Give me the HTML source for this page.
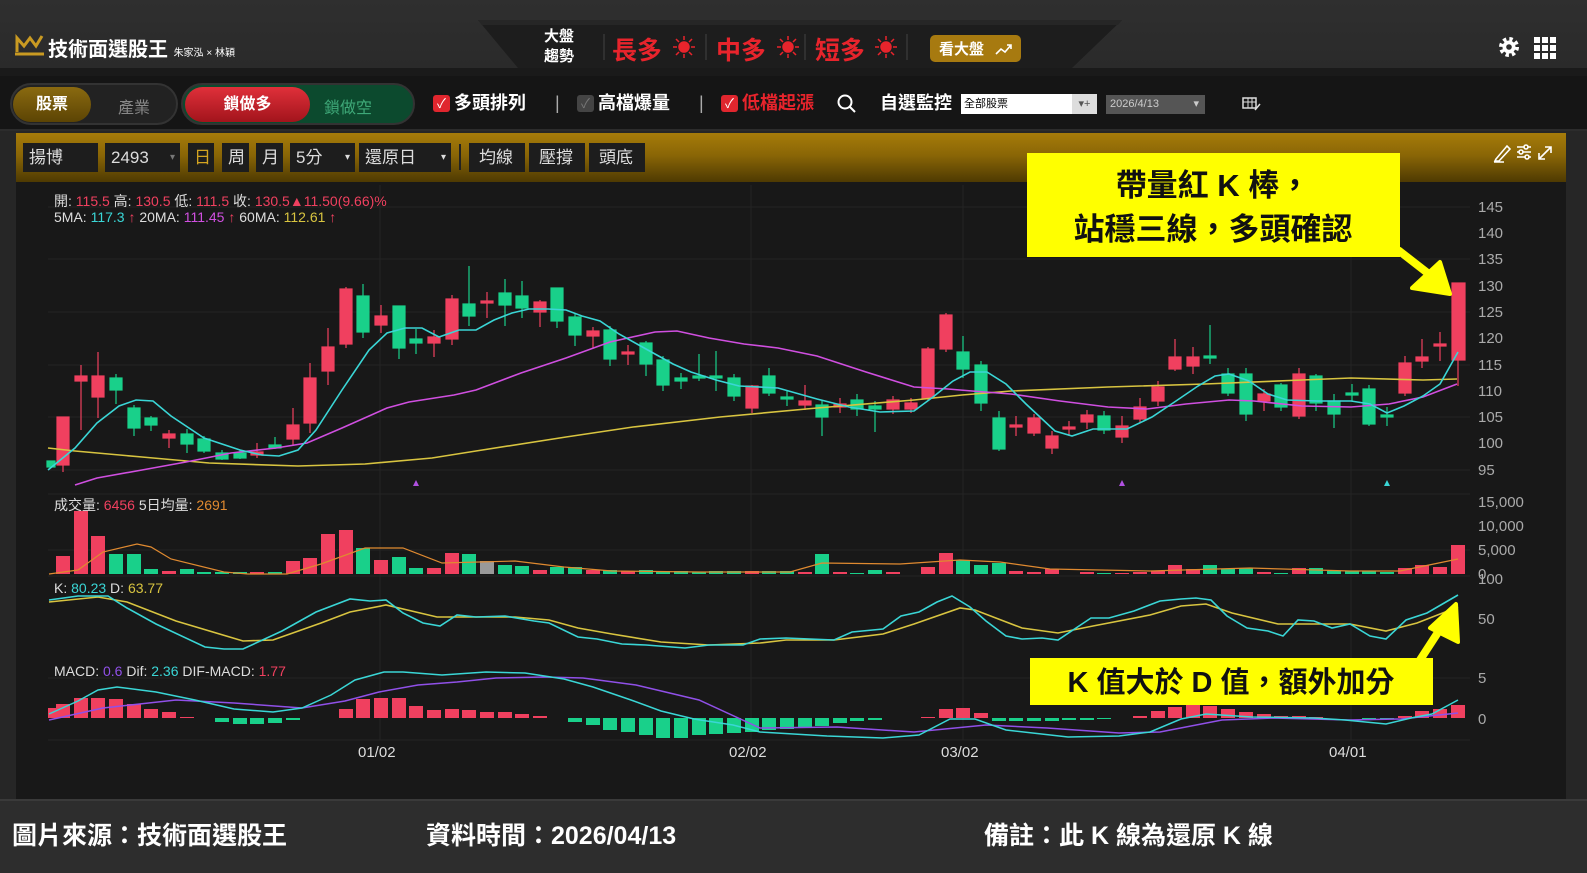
<!DOCTYPE html>
<html><head><meta charset="utf-8">
<style>
*{margin:0;padding:0;box-sizing:border-box}
body{width:1587px;height:873px;overflow:hidden;background:#262626;font-family:"Liberation Sans","Noto Sans CJK TC",sans-serif;position:relative;color:#fff}
.abs{position:absolute}
.top{left:0;top:0;width:1587px;height:70px;background:linear-gradient(#2f2f2f,#2a2a2a)}
.band{left:0;top:68px;width:1587px;height:8px;background:#1a1a1a}
.tool{left:0;top:76px;width:1587px;height:55px;background:#151515;border-bottom:2px solid #2c2c2c}
.gold{left:16px;top:133px;width:1550px;height:49px;background:linear-gradient(#a67c0a,#8a6606 45%,#4e3a02)}
.btn{position:absolute;top:143px;height:29px;background:#1d1d1d;color:#ddd;font-size:17px;line-height:29px;padding-left:6px}
.chart{left:16px;top:182px;width:1550px;height:618px;background:#181818}
.bottom{left:0;top:800px;width:1587px;height:73px;background:#2d2d2d}
.cap{top:816px;font-size:25px;color:#fff;font-weight:bold;letter-spacing:0}
.cb{position:absolute;top:95px;width:17px;height:17px;border-radius:3px;background:#e0262e;color:#fff;font-size:13px;line-height:17px;text-align:center}
.tt{position:absolute;top:90px;font-size:18px;font-weight:bold;line-height:26px}
</style></head><body>
<div class="abs top"></div>
<svg class="abs" style="left:0;top:0" width="1587" height="70">
<polygon points="478,20 1122,20 1072,68 518,68" fill="#1d1d1d"/>
<polygon points="478,20 1122,20 1118,25 482,25" fill="#262626"/>
<path d="M17 52 L17 38 L24 46 L30 38 L36 46 L42 36 M15 54 L44 54" stroke="#c99a22" stroke-width="3" fill="none"/>
<line x1="604" y1="34" x2="604" y2="60" stroke="#444"/><line x1="706" y1="34" x2="706" y2="60" stroke="#444"/><line x1="805" y1="34" x2="805" y2="60" stroke="#444"/><line x1="907" y1="34" x2="907" y2="60" stroke="#444"/>
<g fill="#e8242c" stroke="#e8242c" stroke-width="1.5">
<circle cx="684" cy="47" r="5"/><path d="M684 36v4M684 54v4M673 47h4M691 47h4M676 39l3 3M689 52l3 3M692 39l-3 3M676 55l3-3"/>
<circle cx="788" cy="47" r="5"/><path d="M788 36v4M788 54v4M777 47h4M795 47h4M780 39l3 3M793 52l3 3M796 39l-3 3M780 55l3-3"/>
<circle cx="886" cy="47" r="5"/><path d="M886 36v4M886 54v4M875 47h4M893 47h4M878 39l3 3M891 52l3 3M894 39l-3 3M878 55l3-3"/>
</g>
<rect x="930" y="35" width="91" height="27" rx="5" fill="#a77a10"/>
<path d="M996 54 l5 -5 l4 3 l6 -7 M1007 45 h4 v4" stroke="#fff" stroke-width="1.6" fill="none"/>
<circle cx="1509" cy="47" r="6.5" fill="#fff"/>
<circle cx="1509" cy="47" r="8" fill="none" stroke="#fff" stroke-width="4" stroke-dasharray="3.3 3"/>
<circle cx="1509" cy="47" r="2.8" fill="#2e2e2e"/>
<g fill="#fff"><rect x="1534" y="37" width="6" height="6"/><rect x="1542" y="37" width="6" height="6"/><rect x="1550" y="37" width="6" height="6"/><rect x="1534" y="45" width="6" height="6"/><rect x="1542" y="45" width="6" height="6"/><rect x="1550" y="45" width="6" height="6"/><rect x="1534" y="53" width="6" height="6"/><rect x="1542" y="53" width="6" height="6"/><rect x="1550" y="53" width="6" height="6"/></g>
</svg>
<div class="abs" style="left:48px;top:33px;font-size:20px;font-weight:bold">技術面選股王 <span style="font-size:10px;font-weight:normal">朱家泓 × 林穎</span></div>
<div class="abs" style="left:544px;top:27px;font-size:15px;font-weight:bold;line-height:20px">大盤<br>趨勢</div>
<div class="abs" style="left:612px;top:31px;font-size:25px;font-weight:bold;color:#e8242c">長多</div>
<div class="abs" style="left:716px;top:31px;font-size:25px;font-weight:bold;color:#e8242c">中多</div>
<div class="abs" style="left:815px;top:31px;font-size:25px;font-weight:bold;color:#e8242c">短多</div>
<div class="abs" style="left:939px;top:38px;font-size:15px;font-weight:bold">看大盤</div>
<div class="abs band"></div>
<div class="abs tool"></div>
<div class="abs" style="left:10px;top:83px;width:168px;height:42px;border-radius:21px;background:#222;border:2px solid #333"></div>
<div class="abs" style="left:13px;top:87px;width:78px;height:35px;border-radius:18px;background:linear-gradient(#8a6a10,#5c4404);text-align:center;line-height:35px;font-weight:bold;font-size:16px">股票</div>
<div class="abs" style="left:118px;top:94px;font-size:16px;color:#888">產業</div>
<div class="abs" style="left:181px;top:83px;width:234px;height:42px;border-radius:21px;background:#0c4a2e;border:2px solid #333"></div>
<div class="abs" style="left:185px;top:87px;width:125px;height:35px;border-radius:18px;background:linear-gradient(#e0303a,#a2141c);text-align:center;line-height:35px;font-weight:bold;font-size:16px">鎖做多</div>
<div class="abs" style="left:324px;top:94px;font-size:16px;color:#3ea878">鎖做空</div>
<div class="cb" style="left:433px">✓</div><div class="tt" style="left:454px">多頭排列</div>
<div class="tt" style="left:555px;color:#aaa;font-weight:normal">|</div>
<div class="cb" style="left:577px;background:#444;color:#777">✓</div><div class="tt" style="left:598px">高檔爆量</div>
<div class="tt" style="left:699px;color:#aaa;font-weight:normal">|</div>
<div class="cb" style="left:721px">✓</div><div class="tt" style="left:742px;color:#e8242c">低檔起漲</div>
<svg class="abs" style="left:836px;top:93px" width="22" height="22"><circle cx="9" cy="9" r="6.5" stroke="#fff" stroke-width="2" fill="none"/><line x1="14" y1="14" x2="19" y2="19" stroke="#fff" stroke-width="2"/></svg>
<div class="tt" style="left:880px">自選監控</div>
<div class="abs" style="left:961px;top:94px;width:111px;height:20px;background:#fff;color:#000;font-size:11px;line-height:20px;padding-left:3px">全部股票</div>
<div class="abs" style="left:1072px;top:94px;width:25px;height:20px;background:#ddd;color:#555;font-size:11px;line-height:20px;text-align:center">▾+</div>
<div class="abs" style="left:1106px;top:95px;width:99px;height:19px;background:#555;color:#ccc;font-size:11px;line-height:19px;padding-left:4px">2026/4/13 <span style="float:right;padding-right:6px">▾</span></div>
<svg class="abs" style="left:1242px;top:96px" width="20" height="16"><rect x="1" y="2" width="13" height="10" stroke="#ddd" fill="none" stroke-width="1.5"/><line x1="1" y1="6" x2="14" y2="6" stroke="#ddd"/><line x1="6" y1="2" x2="6" y2="12" stroke="#ddd"/><line x1="10" y1="2" x2="10" y2="12" stroke="#ddd"/><path d="M13 14 l5 -6" stroke="#ddd" stroke-width="1.5"/></svg>
<div class="abs gold"></div>
<div class="btn" style="left:23px;width:75px">揚博</div>
<div class="btn" style="left:105px;width:75px">2493 <span style="float:right;padding-right:5px;font-size:10px;color:#777">▾</span></div>
<div class="btn" style="left:188px;width:26px;color:#d4a420">日</div>
<div class="btn" style="left:222px;width:27px">周</div>
<div class="btn" style="left:256px;width:27px">月</div>
<div class="btn" style="left:290px;width:65px">5分 <span style="float:right;padding-right:5px;font-size:10px">▾</span></div>
<div class="btn" style="left:359px;width:92px">還原日 <span style="float:right;padding-right:5px;font-size:10px">▾</span></div>
<div class="abs" style="left:459px;top:144px;width:2px;height:26px;background:#222"></div>
<div class="btn" style="left:469px;width:56px;padding-left:10px">均線</div>
<div class="btn" style="left:529px;width:56px;padding-left:10px">壓撐</div>
<div class="btn" style="left:589px;width:56px;padding-left:10px">頭底</div>
<svg class="abs" style="left:1490px;top:140px" width="72" height="24" fill="none" stroke="#fff" stroke-width="1.6">
<path d="M6 19 L17 6 L20 9 L9 21 L5 21 Z M4 22 h10"/>
<path d="M27 7h14M27 12h14M27 17h14"/><circle cx="36" cy="7" r="2" fill="#8a6606"/><circle cx="31" cy="12" r="2" fill="#8a6606"/><circle cx="37" cy="17" r="2" fill="#8a6606"/>
<path d="M49 19 L61 7 M55 7h6v6 M49 13v6h6"/>
</svg>
<div class="abs chart"></div>
<svg class="abs" style="left:0;top:0" width="1587" height="873" font-family="Liberation Sans, Noto Sans CJK TC, sans-serif">
<g stroke="#242424" stroke-width="1">
<line x1="48" y1="207" x2="1470" y2="207"/><line x1="48" y1="259" x2="1470" y2="259"/><line x1="48" y1="312" x2="1470" y2="312"/><line x1="48" y1="365" x2="1470" y2="365"/><line x1="48" y1="417" x2="1470" y2="417"/><line x1="48" y1="470" x2="1470" y2="470"/>
<line x1="48" y1="494" x2="1470" y2="494"/><line x1="48" y1="550" x2="1470" y2="550"/><line x1="48" y1="576" x2="1470" y2="576"/><line x1="48" y1="678" x2="1470" y2="678"/><line x1="48" y1="740" x2="1470" y2="740"/>
<line x1="380" y1="185" x2="380" y2="740"/><line x1="751" y1="185" x2="751" y2="740"/><line x1="963" y1="185" x2="963" y2="740"/><line x1="1351" y1="185" x2="1351" y2="740"/>
</g>
<g fill="#aaa" font-size="15">
<text x="1478" y="212">145</text><text x="1478" y="238">140</text><text x="1478" y="264">135</text><text x="1478" y="291">130</text><text x="1478" y="317">125</text><text x="1478" y="343">120</text><text x="1478" y="370">115</text><text x="1478" y="396">110</text><text x="1478" y="422">105</text><text x="1478" y="448">100</text><text x="1478" y="475">95</text>
<text x="1478" y="507">15,000</text><text x="1478" y="531">10,000</text><text x="1478" y="555">5,000</text><text x="1478" y="579">0</text><text x="1478" y="584">100</text><text x="1478" y="624">50</text><text x="1478" y="683">5</text><text x="1478" y="724">0</text>
</g>
<g fill="#ddd" font-size="15"><text x="358" y="757">01/02</text><text x="729" y="757">02/02</text><text x="941" y="757">03/02</text><text x="1329" y="757">04/01</text></g>
<g font-size="14">
<text x="54" y="206" fill="#ddd">開: <tspan fill="#f0405f">115.5</tspan> 高: <tspan fill="#f0405f">130.5</tspan> 低: <tspan fill="#f0405f">111.5</tspan> 收: <tspan fill="#f0405f">130.5▲11.50(9.66)%</tspan></text>
<text x="54" y="222" fill="#ddd">5MA: <tspan fill="#3ad6d6">117.3</tspan> <tspan fill="#f0405f">↑</tspan> 20MA: <tspan fill="#d04fe0">111.45</tspan> <tspan fill="#f0405f">↑</tspan> 60MA: <tspan fill="#d8c440">112.61</tspan> <tspan fill="#f0405f">↑</tspan></text>
<text x="54" y="510" fill="#ddd">成交量: <tspan fill="#f0405f">6456</tspan> 5日均量: <tspan fill="#e08a30">2691</tspan></text>
<text x="54" y="593" fill="#ddd">K: <tspan fill="#3ad6d6">80.23</tspan> D: <tspan fill="#d8c440">63.77</tspan></text>
<text x="54" y="676" fill="#ddd">MACD: <tspan fill="#9050e8">0.6</tspan> Dif: <tspan fill="#3ad6d6">2.36</tspan> DIF-MACD: <tspan fill="#f0405f">1.77</tspan></text>
</g>
<g fill="#b050e0"><path d="M413 486l3-6 3 6z"/><path d="M1119 486l3-6 3 6z"/></g><path d="M1384 486l3-6 3 6z" fill="#3ad6d6"/>
<g stroke-width="1.2">
<g stroke="#f0405f" fill="#f0405f">
<line x1="63" y1="417" x2="63" y2="472"/><rect x="57" y="417" width="12" height="48"/>
<line x1="81" y1="365" x2="81" y2="430"/><rect x="75" y="376" width="12" height="5"/>
<line x1="98" y1="352" x2="98" y2="418"/><rect x="92" y="376" width="12" height="21"/>
<line x1="169" y1="430" x2="169" y2="448"/><rect x="163" y="434" width="12" height="4"/>
<line x1="257" y1="443" x2="257" y2="458"/><rect x="251" y="452" width="12" height="3"/>
<line x1="293" y1="408" x2="293" y2="445"/><rect x="287" y="425" width="12" height="14"/>
<line x1="310" y1="363" x2="310" y2="433"/><rect x="304" y="378" width="12" height="45"/>
<line x1="328" y1="328" x2="328" y2="385"/><rect x="322" y="347" width="12" height="24"/>
<line x1="346" y1="287" x2="346" y2="348"/><rect x="340" y="289" width="12" height="55"/>
<line x1="381" y1="305" x2="381" y2="333"/><rect x="375" y="316" width="12" height="9"/>
<line x1="434" y1="330" x2="434" y2="357"/><rect x="428" y="337" width="12" height="6"/>
<line x1="452" y1="295" x2="452" y2="345"/><rect x="446" y="299" width="12" height="40"/>
<line x1="487" y1="292" x2="487" y2="318"/><rect x="481" y="301" width="12" height="2"/>
<line x1="540" y1="300" x2="540" y2="327"/><rect x="534" y="302" width="12" height="10"/>
<line x1="593" y1="327" x2="593" y2="348"/><rect x="587" y="331" width="12" height="5"/>
<line x1="628" y1="345" x2="628" y2="365"/><rect x="622" y="352" width="12" height="2"/>
<line x1="752" y1="385" x2="752" y2="413"/><rect x="746" y="386" width="12" height="22"/>
<line x1="805" y1="385" x2="805" y2="410"/><rect x="799" y="401" width="12" height="4"/>
<line x1="840" y1="398" x2="840" y2="413"/><rect x="834" y="404" width="12" height="3"/>
<line x1="893" y1="396" x2="893" y2="414"/><rect x="887" y="400" width="12" height="9"/>
<line x1="911" y1="398" x2="911" y2="413"/><rect x="905" y="403" width="12" height="6"/>
<line x1="928" y1="347" x2="928" y2="400"/><rect x="922" y="349" width="12" height="49"/>
<line x1="946" y1="313" x2="946" y2="352"/><rect x="940" y="315" width="12" height="34"/>
<line x1="1016" y1="416" x2="1016" y2="436"/><rect x="1010" y="425" width="12" height="2"/>
<line x1="1034" y1="414" x2="1034" y2="436"/><rect x="1028" y="418" width="12" height="15"/>
<line x1="1052" y1="431" x2="1052" y2="454"/><rect x="1046" y="436" width="12" height="12"/>
<line x1="1069" y1="421" x2="1069" y2="436"/><rect x="1063" y="427" width="12" height="2"/>
<line x1="1087" y1="410" x2="1087" y2="429"/><rect x="1081" y="415" width="12" height="7"/>
<line x1="1122" y1="416" x2="1122" y2="443"/><rect x="1116" y="426" width="12" height="11"/>
<line x1="1140" y1="398" x2="1140" y2="423"/><rect x="1134" y="407" width="12" height="12"/>
<line x1="1158" y1="381" x2="1158" y2="406"/><rect x="1152" y="387" width="12" height="14"/>
<line x1="1175" y1="339" x2="1175" y2="371"/><rect x="1169" y="357" width="12" height="12"/>
<line x1="1193" y1="347" x2="1193" y2="374"/><rect x="1187" y="357" width="12" height="9"/>
<line x1="1264" y1="389" x2="1264" y2="411"/><rect x="1258" y="394" width="12" height="7"/>
<line x1="1299" y1="368" x2="1299" y2="419"/><rect x="1293" y="374" width="12" height="42"/>
<line x1="1405" y1="356" x2="1405" y2="396"/><rect x="1399" y="363" width="12" height="30"/>
<line x1="1422" y1="339" x2="1422" y2="368"/><rect x="1416" y="357" width="12" height="4"/>
<line x1="1440" y1="332" x2="1440" y2="361"/><rect x="1434" y="344" width="12" height="2"/>
<line x1="1458" y1="283" x2="1458" y2="386"/><rect x="1452" y="283" width="13" height="77"/>
</g>
<g stroke="#19d08a" fill="#19d08a">
<rect x="47" y="461" width="8" height="6"/>
<line x1="116" y1="374" x2="116" y2="404"/><rect x="110" y="378" width="12" height="12"/>
<line x1="134" y1="405" x2="134" y2="436"/><rect x="128" y="408" width="12" height="20"/>
<line x1="151" y1="416" x2="151" y2="431"/><rect x="145" y="418" width="12" height="7"/>
<line x1="187" y1="429" x2="187" y2="453"/><rect x="181" y="434" width="12" height="10"/>
<line x1="204" y1="436" x2="204" y2="453"/><rect x="198" y="439" width="12" height="12"/>
<line x1="222" y1="450" x2="222" y2="460"/><rect x="216" y="453" width="12" height="6"/>
<line x1="240" y1="450" x2="240" y2="459"/><rect x="234" y="453" width="12" height="5"/>
<line x1="275" y1="437" x2="275" y2="449"/><rect x="269" y="445" width="12" height="3"/>
<line x1="363" y1="284" x2="363" y2="338"/><rect x="357" y="296" width="12" height="36"/>
<line x1="399" y1="306" x2="399" y2="359"/><rect x="393" y="306" width="12" height="42"/>
<line x1="416" y1="329" x2="416" y2="354"/><rect x="410" y="339" width="12" height="4"/>
<line x1="469" y1="266" x2="469" y2="326"/><rect x="463" y="304" width="12" height="12"/>
<line x1="505" y1="279" x2="505" y2="326"/><rect x="499" y="293" width="12" height="12"/>
<line x1="522" y1="281" x2="522" y2="318"/><rect x="516" y="296" width="12" height="12"/>
<line x1="557" y1="288" x2="557" y2="328"/><rect x="551" y="288" width="12" height="33"/>
<line x1="575" y1="314" x2="575" y2="346"/><rect x="569" y="317" width="12" height="18"/>
<line x1="610" y1="326" x2="610" y2="366"/><rect x="604" y="330" width="12" height="29"/>
<line x1="646" y1="341" x2="646" y2="376"/><rect x="640" y="343" width="12" height="21"/>
<line x1="663" y1="356" x2="663" y2="391"/><rect x="657" y="360" width="12" height="25"/>
<line x1="681" y1="373" x2="681" y2="389"/><rect x="675" y="378" width="12" height="3"/>
<line x1="699" y1="354" x2="699" y2="381"/><rect x="693" y="376" width="12" height="2"/>
<line x1="716" y1="351" x2="716" y2="391"/><rect x="710" y="376" width="12" height="2"/>
<line x1="734" y1="374" x2="734" y2="401"/><rect x="728" y="378" width="12" height="18"/>
<line x1="769" y1="368" x2="769" y2="396"/><rect x="763" y="376" width="12" height="17"/>
<line x1="787" y1="391" x2="787" y2="406"/><rect x="781" y="397" width="12" height="2"/>
<line x1="822" y1="401" x2="822" y2="436"/><rect x="816" y="405" width="12" height="12"/>
<line x1="857" y1="394" x2="857" y2="416"/><rect x="851" y="400" width="12" height="9"/>
<line x1="875" y1="401" x2="875" y2="432"/><rect x="869" y="406" width="12" height="3"/>
<line x1="963" y1="336" x2="963" y2="378"/><rect x="957" y="352" width="12" height="17"/>
<line x1="981" y1="361" x2="981" y2="411"/><rect x="975" y="365" width="12" height="38"/>
<line x1="999" y1="411" x2="999" y2="451"/><rect x="993" y="418" width="12" height="31"/>
<line x1="1104" y1="411" x2="1104" y2="434"/><rect x="1098" y="416" width="12" height="14"/>
<line x1="1210" y1="325" x2="1210" y2="364"/><rect x="1204" y="356" width="12" height="2"/>
<line x1="1228" y1="368" x2="1228" y2="396"/><rect x="1222" y="374" width="12" height="19"/>
<line x1="1246" y1="368" x2="1246" y2="421"/><rect x="1240" y="374" width="12" height="40"/>
<line x1="1281" y1="383" x2="1281" y2="411"/><rect x="1275" y="385" width="12" height="22"/>
<line x1="1316" y1="374" x2="1316" y2="411"/><rect x="1310" y="376" width="12" height="27"/>
<line x1="1334" y1="394" x2="1334" y2="428"/><rect x="1328" y="401" width="12" height="13"/>
<line x1="1352" y1="384" x2="1352" y2="401"/><rect x="1346" y="393" width="12" height="2"/>
<line x1="1369" y1="385" x2="1369" y2="426"/><rect x="1363" y="389" width="12" height="35"/>
<line x1="1387" y1="407" x2="1387" y2="426"/><rect x="1381" y="415" width="12" height="2"/>
</g>
</g>
<g fill="none" stroke-width="1.6">
<polyline stroke="#d8c440" points="48,448 75,451 142,457 209,463 298,466 365,464 432,458 476,451 566,437 633,427 720,417 817,408 914,400 962,395 1011,391 1108,387 1205,384 1302,380 1351,378 1423,380 1457,379"/>
<polyline stroke="#d04fe0" points="75,485 97,478 142,470 186,462 231,453 276,448 307,443 342,428 387,408 409,402 454,395 476,390 521,373 566,358 610,342 655,332 677,331 709,338 744,344 778,348 817,356 866,372 914,387 948,389 972,391 1011,394 1060,401 1108,407 1147,409 1186,404 1229,400 1254,401 1302,406 1351,407 1389,404 1423,397 1457,384"/>
<polyline stroke="#3ad6d6" points="48,470 75,448 97,423 119,406 136,400 153,401 171,416 204,438 240,450 262,455 279,456 298,450 316,430 342,390 369,350 387,333 405,328 422,328 439,337 459,330 476,330 494,320 512,313 529,309 548,309 566,310 582,316 600,321 619,334 637,344 655,354 673,364 691,372 716,380 739,386 778,388 817,399 849,407 880,412 914,411 933,397 953,381 970,372 987,372 1006,384 1026,404 1055,431 1072,436 1093,429 1127,429 1152,417 1176,401 1198,386 1215,376 1229,374 1249,381 1268,394 1287,400 1317,401 1351,401 1370,404 1387,413 1404,406 1423,396 1440,384 1458,352"/>
</g>
<g>
<g fill="#f0405f">
<rect x="56" y="556" width="14" height="18"/><rect x="74" y="511" width="14" height="63"/><rect x="91" y="536" width="14" height="38"/><rect x="162" y="571" width="14" height="3"/><rect x="250" y="572" width="14" height="2"/><rect x="286" y="561" width="14" height="13"/><rect x="303" y="558" width="14" height="16"/><rect x="321" y="534" width="14" height="40"/><rect x="339" y="530" width="14" height="44"/><rect x="374" y="560" width="14" height="14"/><rect x="427" y="568" width="14" height="6"/><rect x="445" y="553" width="14" height="21"/><rect x="533" y="570" width="14" height="4"/><rect x="586" y="570" width="14" height="4"/><rect x="621" y="571" width="14" height="3"/><rect x="745" y="571" width="14" height="3"/><rect x="798" y="572" width="14" height="2"/><rect x="833" y="572" width="14" height="2"/><rect x="886" y="572" width="14" height="2"/><rect x="921" y="567" width="14" height="7"/><rect x="939" y="553" width="14" height="21"/><rect x="1009" y="571" width="14" height="3"/><rect x="1027" y="572" width="14" height="2"/><rect x="1045" y="569" width="14" height="5"/><rect x="1080" y="572" width="14" height="2"/><rect x="1115" y="573" width="14" height="1"/><rect x="1133" y="572" width="14" height="2"/><rect x="1151" y="571" width="14" height="3"/><rect x="1168" y="565" width="14" height="9"/><rect x="1186" y="569" width="14" height="5"/><rect x="1257" y="572" width="14" height="2"/><rect x="1292" y="568" width="14" height="6"/><rect x="1398" y="568" width="14" height="6"/><rect x="1415" y="565" width="14" height="9"/><rect x="1433" y="567" width="14" height="7"/><rect x="1451" y="545" width="14" height="29"/>
</g>
<g fill="#19d08a">
<rect x="109" y="554" width="14" height="20"/><rect x="127" y="554" width="14" height="20"/><rect x="144" y="569" width="14" height="5"/><rect x="180" y="569" width="14" height="5"/><rect x="197" y="572" width="14" height="2"/><rect x="215" y="572" width="14" height="2"/><rect x="233" y="572" width="14" height="2"/><rect x="268" y="572" width="14" height="2"/><rect x="356" y="548" width="14" height="26"/><rect x="392" y="557" width="14" height="17"/><rect x="409" y="568" width="14" height="6"/><rect x="462" y="554" width="14" height="20"/><rect x="498" y="565" width="14" height="9"/><rect x="515" y="566" width="14" height="8"/><rect x="550" y="567" width="14" height="7"/><rect x="568" y="567" width="14" height="7"/><rect x="603" y="570" width="14" height="4"/><rect x="639" y="570" width="14" height="4"/><rect x="656" y="571" width="14" height="3"/><rect x="674" y="571" width="14" height="3"/><rect x="692" y="572" width="14" height="2"/><rect x="709" y="571" width="14" height="3"/><rect x="727" y="571" width="14" height="3"/><rect x="762" y="571" width="14" height="3"/><rect x="780" y="571" width="14" height="3"/><rect x="815" y="554" width="14" height="20"/><rect x="850" y="573" width="14" height="1"/><rect x="868" y="570" width="14" height="4"/><rect x="956" y="560" width="14" height="14"/><rect x="974" y="565" width="14" height="9"/><rect x="992" y="563" width="14" height="11"/><rect x="1097" y="573" width="14" height="1"/><rect x="1203" y="565" width="14" height="9"/><rect x="1221" y="569" width="14" height="5"/><rect x="1239" y="568" width="14" height="6"/><rect x="1274" y="573" width="14" height="1"/><rect x="1309" y="568" width="14" height="6"/><rect x="1327" y="571" width="14" height="3"/><rect x="1345" y="571" width="14" height="3"/><rect x="1362" y="571" width="14" height="3"/><rect x="1380" y="572" width="14" height="2"/>
</g>
<rect x="480" y="561" width="14" height="13" fill="#999"/>
<polyline fill="none" stroke="#e08a30" stroke-width="1.2" points="49,574 78,570 103,552 137,544 151,547 171,559 224,572 248,574 287,574 321,564 365,548 403,548 442,563 515,561 564,567 612,571 700,572 790,572 822,563 900,564 960,560 1000,562 1050,569 1150,571 1250,568 1350,571 1400,571 1458,559"/>
</g>
<g fill="none" stroke-width="1.6">
<polyline stroke="#d8c440" points="49,602 98,597 127,602 176,621 243,641 273,640 321,623 350,612 386,605 437,617 515,617 549,620 578,628 612,634 661,642 709,645 760,643 786,640 834,640 883,634 914,624 960,608 975,610 1022,628 1058,633 1093,626 1150,615 1181,606 1206,604 1232,613 1278,624 1324,624 1350,624 1386,631 1417,623 1458,607"/>
<polyline stroke="#3ad6d6" points="49,600 78,596 108,596 127,608 156,624 205,647 224,649 243,649 282,631 316,612 350,599 370,601 386,600 403,613 423,623 440,626 457,615 476,617 505,616 534,621 549,623 578,637 597,639 622,644 646,645 685,648 709,645 743,645 760,639 786,638 834,640 852,632 883,629 901,616 919,612 937,602 952,596 970,607 986,621 1006,636 1022,639 1042,638 1058,640 1091,618 1109,618 1134,611 1160,601 1181,599 1196,598 1211,600 1227,616 1247,628 1268,631 1283,636 1298,620 1314,621 1332,628 1350,624 1370,636 1386,639 1406,620 1427,613 1458,595"/>
</g>
<g>
<g fill="#f0405f">
<rect x="48" y="708" width="8" height="10"/><rect x="56" y="704" width="14" height="14"/><rect x="74" y="698" width="14" height="20"/><rect x="91" y="698" width="14" height="20"/><rect x="109" y="699" width="14" height="19"/><rect x="127" y="704" width="14" height="14"/><rect x="144" y="709" width="14" height="9"/><rect x="162" y="712" width="14" height="6"/><rect x="180" y="717" width="14" height="1"/><rect x="339" y="709" width="14" height="9"/><rect x="356" y="699" width="14" height="19"/><rect x="374" y="698" width="14" height="20"/><rect x="392" y="698" width="14" height="20"/><rect x="409" y="706" width="14" height="12"/><rect x="427" y="710" width="14" height="8"/><rect x="445" y="709" width="14" height="9"/><rect x="462" y="710" width="14" height="8"/><rect x="480" y="712" width="14" height="6"/><rect x="498" y="712" width="14" height="6"/><rect x="515" y="714" width="14" height="4"/><rect x="533" y="716" width="14" height="2"/><rect x="921" y="717" width="14" height="1"/><rect x="939" y="709" width="14" height="9"/><rect x="956" y="708" width="14" height="10"/><rect x="974" y="713" width="14" height="5"/><rect x="1133" y="716" width="14" height="2"/><rect x="1151" y="711" width="14" height="7"/><rect x="1168" y="707" width="14" height="11"/><rect x="1186" y="705" width="14" height="13"/><rect x="1203" y="706" width="14" height="12"/><rect x="1221" y="709" width="14" height="9"/><rect x="1239" y="712" width="14" height="6"/><rect x="1257" y="714" width="14" height="4"/><rect x="1274" y="716" width="14" height="2"/><rect x="1292" y="716" width="14" height="2"/><rect x="1309" y="717" width="14" height="1"/><rect x="1398" y="716" width="14" height="2"/><rect x="1415" y="711" width="14" height="7"/><rect x="1433" y="709" width="14" height="9"/><rect x="1451" y="705" width="14" height="13"/>
</g>
<g fill="#19d08a">
<rect x="215" y="718" width="14" height="4"/><rect x="233" y="718" width="14" height="6"/><rect x="250" y="718" width="14" height="6"/><rect x="268" y="718" width="14" height="5"/><rect x="286" y="718" width="14" height="2"/><rect x="568" y="718" width="14" height="4"/><rect x="586" y="718" width="14" height="7"/><rect x="603" y="718" width="14" height="12"/><rect x="621" y="718" width="14" height="14"/><rect x="639" y="718" width="14" height="17"/><rect x="656" y="718" width="14" height="20"/><rect x="674" y="718" width="14" height="20"/><rect x="692" y="718" width="14" height="17"/><rect x="709" y="718" width="14" height="16"/><rect x="727" y="718" width="14" height="15"/><rect x="745" y="718" width="14" height="14"/><rect x="762" y="718" width="14" height="12"/><rect x="780" y="718" width="14" height="11"/><rect x="798" y="718" width="14" height="9"/><rect x="815" y="718" width="14" height="8"/><rect x="833" y="718" width="14" height="5"/><rect x="850" y="718" width="14" height="3"/><rect x="868" y="718" width="14" height="2"/><rect x="992" y="718" width="14" height="3"/><rect x="1009" y="718" width="14" height="3"/><rect x="1027" y="718" width="14" height="3"/><rect x="1045" y="718" width="14" height="3"/><rect x="1062" y="718" width="14" height="2"/><rect x="1080" y="718" width="14" height="2"/><rect x="1097" y="718" width="14" height="1"/><rect x="1362" y="718" width="14" height="1"/><rect x="1380" y="718" width="14" height="1"/>
</g>
<polyline fill="none" stroke="#9050e8" stroke-width="1.5" points="49,720 103,708 176,700 234,703 302,708 345,701 379,692 418,685 457,682 496,678 544,677 583,678 636,685 699,700 760,728 837,727 914,732 986,725 1047,728 1119,733 1160,732 1222,720 1273,718 1350,720 1401,719 1458,713"/>
<polyline fill="none" stroke="#3ad6d6" stroke-width="1.5" points="49,714 78,701 98,690 117,687 156,692 195,700 234,709 273,712 302,708 331,695 355,680 384,672 403,672 442,675 486,672 525,673 564,679 593,687 631,700 661,711 694,719 733,725 760,732 827,736 883,738 919,735 950,719 975,719 1006,730 1068,737 1119,736 1150,732 1181,719 1206,714 1252,717 1314,718 1345,720 1386,724 1411,718 1432,714 1458,700"/>
</g>
<rect x="1027" y="153" width="373" height="104" fill="#ffff00"/>
<text x="1213" y="196" text-anchor="middle" font-size="31" font-weight="bold" fill="#111">帶量紅 K 棒，</text>
<text x="1213" y="240" text-anchor="middle" font-size="31" font-weight="bold" fill="#111">站穩三線，多頭確認</text>
<path d="M1398 250 L1434 278" stroke="#ffff00" stroke-width="8" fill="none"/>
<path d="M1450 294 L1412 288 L1440 262 Z" fill="#ffff00" stroke="#ffff00" stroke-width="4" stroke-linejoin="round"/>
<rect x="1030" y="658" width="403" height="47" fill="#ffff00"/>
<text x="1231" y="692" text-anchor="middle" font-size="29" font-weight="bold" fill="#111">K 值大於 D 值，額外加分</text>
<path d="M1420 660 L1446 620" stroke="#ffff00" stroke-width="8" fill="none"/>
<path d="M1456 604 L1458 642 L1430 628 Z" fill="#ffff00" stroke="#ffff00" stroke-width="4" stroke-linejoin="round"/>
</svg>
<div class="abs bottom"></div>
<div class="abs" style="left:0;top:799px;width:1587px;height:2px;background:#3a3a3a"></div>
<div class="abs cap" style="left:12px">圖片來源：技術面選股王</div>
<div class="abs cap" style="left:426px">資料時間：2026/04/13</div>
<div class="abs cap" style="left:984px">備註：此 K 線為還原 K 線</div>
</body></html>
